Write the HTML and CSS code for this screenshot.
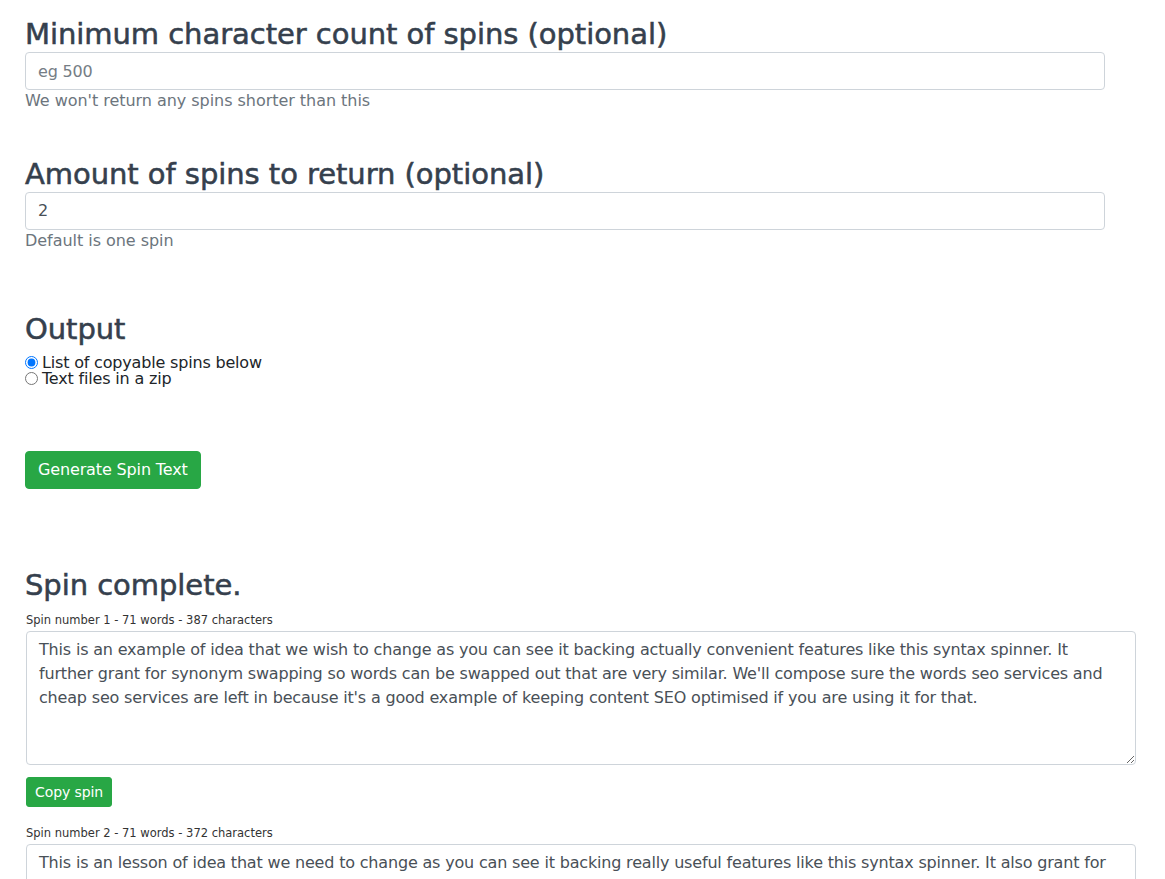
FILE: index.html
```html
<!DOCTYPE html>
<html lang="en">
<head>
<meta charset="utf-8">
<title>Spin Text</title>
<link rel="stylesheet" href="styles.css">
</head>
<body>
<main class="page">
  <section class="field field-first">
    <h3 class="heading">Minimum character count of spins (optional)</h3>
    <input class="form-control" type="text" placeholder="eg 500">
    <div class="help">We won't return any spins shorter than this</div>
  </section>

  <section class="field field-amount">
    <h3 class="heading">Amount of spins to return (optional)</h3>
    <input class="form-control" type="text" value="2">
    <div class="help">Default is one spin</div>
  </section>

  <section class="field field-output">
    <h3 class="heading">Output</h3>
    <label class="radio-row"><input type="radio" name="output" checked><span>List of copyable spins below</span></label>
    <label class="radio-row"><input type="radio" name="output"><span>Text files in a zip</span></label>
  </section>

  <div class="actions">
    <button class="btn-success" type="button">Generate Spin Text</button>
  </div>

  <section class="results">
    <h3 class="heading">Spin complete.</h3>

    <div class="spin">
      <div class="spin-meta">Spin number 1 - 71 words - 387 characters</div>
      <textarea class="spin-text" rows="5">This is an example of idea that we wish to change as you can see it backing actually convenient features like this syntax spinner. It further grant for synonym swapping so words can be swapped out that are very similar. We'll compose sure the words seo services and cheap seo services are left in because it's a good example of keeping content SEO optimised if you are using it for that.</textarea>
      <button class="btn-success btn-sm" type="button">Copy spin</button>
    </div>

    <div class="spin">
      <div class="spin-meta">Spin number 2 - 71 words - 372 characters</div>
      <textarea class="spin-text" rows="5">This is an lesson of idea that we need to change as you can see it backing really useful features like this syntax spinner. It also grant for synonym swapping so words can be swapped out that are very similar. We'll make sure the words seo services and cheap seo services are left in because it's a good example of keeping content SEO optimised if you are using it for that.</textarea>
      <button class="btn-success btn-sm" type="button">Copy spin</button>
    </div>
  </section>
</main>
</body>
</html>
```
FILE: styles.css
```css
html, body {
  margin: 0;
  padding: 0;
  background: #ffffff;
}

body {
  font-family: "DejaVu Sans", "Liberation Sans", sans-serif;
  font-size: 16px;
  color: #212529;
  letter-spacing: -0.18px;
}

.page {
  padding: 17px 0 40px 25px;
}

.heading {
  margin: 0 0 1px 0;
  font-size: 29px;
  line-height: 34px;
  font-weight: 500;
  color: #35404d;
  letter-spacing: -0.05px;
  -webkit-text-stroke: 0.55px #35404d;
}

.form-control {
  display: block;
  box-sizing: border-box;
  width: 1080px;
  height: 38px;
  margin: 0;
  padding: 6px 12px;
  font-family: inherit;
  font-size: 16px;
  letter-spacing: -0.18px;
  line-height: 24px;
  color: #495057;
  background: #fff;
  border: 1px solid #ced4da;
  border-radius: 4px;
  outline: none;
}

.form-control::placeholder {
  color: #757d85;
  opacity: 1;
}

.help {
  margin-top: 1px;
  font-size: 16px;
  line-height: 19px;
  letter-spacing: -0.04px;
  color: #6c757d;
}

.field-first {
  margin-bottom: 46.5px;
}

.field-amount {
  margin-bottom: 62.8px;
}

.field-output .heading {
  margin-bottom: 8.5px;
}

.radio-row {
  display: flex;
  align-items: center;
  height: 16px;
  line-height: 16px;
  font-size: 16px;
  color: #212529;
}

.radio-row input {
  width: 13px;
  height: 13px;
  margin: 0 4px 0 0;
  flex: none;
}

.actions {
  margin-top: 64.2px;
}

.btn-success {
  display: inline-block;
  box-sizing: border-box;
  margin: 0;
  padding: 6px 12px;
  font-family: inherit;
  font-size: 16px;
  line-height: 24px;
  letter-spacing: -0.14px;
  color: #fff;
  background: #28a745;
  border: 1px solid #28a745;
  border-radius: 4px;
  cursor: pointer;
}

.btn-sm {
  padding: 4px 8px;
  font-size: 14px;
  line-height: 20px;
  letter-spacing: -0.1px;
  border-radius: 3px;
}

.results {
  margin-top: 79px;
}

.results > .heading {
  margin-bottom: 12px;
}

.spin {
  margin-left: 1px;
  margin-bottom: 20px;
}

.spin-meta {
  font-size: 11.5px;
  line-height: 13px;
  letter-spacing: 0;
  color: #333;
  margin-bottom: 4px;
}

.spin-text {
  display: block;
  box-sizing: border-box;
  width: 1110px;
  height: 134px;
  margin: 0 0 12px 0;
  padding: 6px 12px;
  font-family: inherit;
  font-size: 16px;
  line-height: 24px;
  letter-spacing: -0.18px;
  color: #495057;
  background: #fff;
  border: 1px solid #ced4da;
  border-radius: 4px;
  outline: none;
}
```
